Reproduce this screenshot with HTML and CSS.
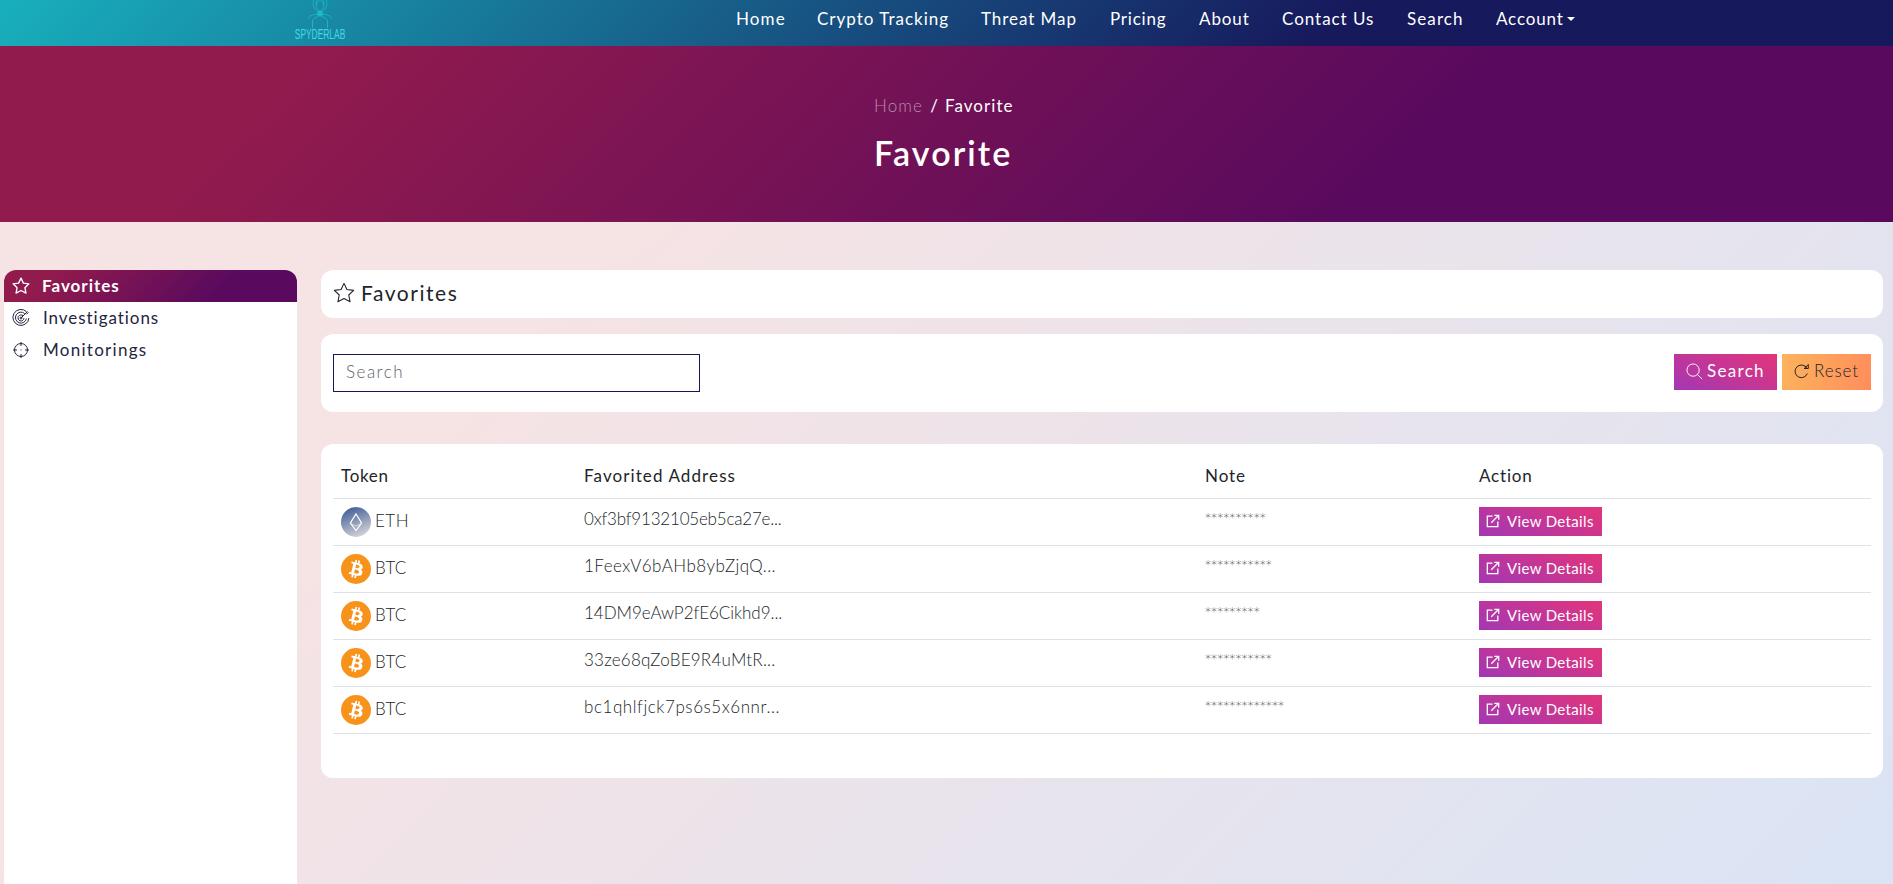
FILE: index.html
```html
<!DOCTYPE html>
<html lang="en">
<head>
<meta charset="utf-8">
<title>Favorite</title>
<link rel="stylesheet" href="styles.css">
</head>
<body>
<svg class="defs" width="0" height="0">
  <defs>
    <linearGradient id="ethg" x1="0.2" y1="0" x2="0.6" y2="1"><stop offset="0" stop-color="#3d5b97"/><stop offset="1" stop-color="#d3d2d6"/></linearGradient>
    <symbol id="star" viewBox="0 0 24 24"><path d="M12 1.500l3.200 6.700 7.300.9-5.300 5.100 1.400 7.300-6.600-3.500-6.600 3.500 1.400-7.300L1.500 9.100l7.300-.9z" fill="none" stroke="currentColor" stroke-linejoin="round"/></symbol>
    <symbol id="ext" viewBox="0 0 16 16"><path d="M7.500 2.500H1.500v12h12V8.500M9.500 1.500h5v5M14.500 1.500L6 10" fill="none" stroke="currentColor" stroke-width="1.500"/></symbol>
    <symbol id="eth" viewBox="0 0 30 30"><circle cx="15" cy="15" r="15" fill="url(#ethg)"/><path d="M15 7l5.600 9L15 23.500 9.400 16z" fill="none" stroke="#fff" stroke-width="1.200"/><path d="M10 16.500l5 2.500 5-2.500" fill="none" stroke="#fff" stroke-opacity=".55"/></symbol>
    <symbol id="btc" viewBox="0 0 32 32"><circle cx="16" cy="16" r="16" fill="#f7931a"/><path fill="#fff" fill-rule="evenodd" d="M23.189 14.020c.314-2.096-1.283-3.223-3.465-3.975l.708-2.840-1.728-.43-.69 2.765c-.454-.114-.92-.22-1.385-.326l.695-2.783L15.596 6l-.708 2.839c-.376-.086-.746-.17-1.104-.26l.002-.009-2.384-.595-.46 1.846s1.283.294 1.256.312c.7.175.826.638.805 1.006l-.806 3.235c.048.012.110.030.180.057l-.183-.045-1.130 4.532c-.086.212-.303.531-.793.410.018.025-1.256-.313-1.256-.313l-.858 1.978 2.250.561c.418.105.828.215 1.231.318l-.715 2.872 1.727.43.708-2.840c.472.127.930.245 1.378.357l-.706 2.828 1.728.43.715-2.866c2.948.558 5.164.333 6.097-2.333.752-2.146-.037-3.385-1.588-4.192 1.130-.26 1.980-1.003 2.207-2.538zm-3.950 5.538c-.533 2.147-4.148.986-5.320.695l.950-3.805c1.172.293 4.929.872 4.370 3.110zm.535-5.569c-.487 1.953-3.495.960-4.470.717l.860-3.450c.975.243 4.118.696 3.610 2.733z"/></symbol>
  </defs>
</svg>
<header class="navbar">
  <a class="logo">
    <svg class="spider" viewBox="0 0 26 28"><path d="M7 0C5 5 7 9 11 12M19 0C21 5 19 9 15 12M10 0L9 5M16 0L17 5M1 19C3 15 7 14 11 14.500M25 19C23 15 19 14 15 14.500M5.500 28V20L11 16M20.500 28V20L15 16"/><circle cx="13" cy="13.500" r="2.800"/><ellipse class="body" cx="13" cy="5.500" rx="3.500" ry="5.500"/></svg>
    <span class="wordmark">SPYDERLAB</span>
  </a>
  <nav class="menu">
    <a class="m-home">Home</a><a class="m-crypto">Crypto Tracking</a><a class="m-threat">Threat Map</a><a class="m-pricing">Pricing</a><a class="m-about">About</a><a class="m-contact">Contact Us</a><a class="m-search">Search</a><a class="m-account">Account<i class="caret"></i></a>
  </nav>
</header>
<section class="hero">
  <div class="hero-inner">
    <div class="crumbs"><span class="crumb-home">Home</span><span class="slash">/</span><span class="crumb-cur">Favorite</span></div>
    <h1>Favorite</h1>
  </div>
</section>
<main class="layout">
  <aside class="side">
    <a class="side-item active"><svg class="side-icon" stroke-width="1.800"><use href="#star"/></svg><span class="s-fav">Favorites</span></a>
    <a class="side-item"><svg class="side-icon" viewBox="0 0 18 18" fill="none" stroke="currentColor"><path d="M14.500 2.700A8 8 0 1 0 16.900 9M12.700 4.600A5.500 5.500 0 1 0 14.400 9.500M11 6.700A3 3 0 1 0 12 9M9 9l6.500-6.500M16.500 3.500l-2 1.500"/><circle cx="9" cy="9" r="1"/></svg><span class="s-inv">Investigations</span></a>
    <a class="side-item"><svg class="side-icon" viewBox="0 0 18 18" fill="none" stroke="currentColor"><circle cx="9" cy="9" r="6.500"/><path d="M9 1v4M9 13v4M1 9h4M13 9h4M9 8.500v1"/></svg><span class="s-mon">Monitorings</span></a>
  </aside>
  <div class="content">
    <div class="card title-card"><svg class="title-icon" stroke-width="1.200"><use href="#star"/></svg><h2>Favorites</h2></div>
    <div class="card search-card">
      <div class="field"><span>Search</span></div>
      <div class="buttons">
        <button class="btn find"><svg viewBox="0 0 18 18" fill="none" stroke="currentColor"><circle cx="7.500" cy="7.500" r="6.500"/><path d="M12.200 12.200l5 5"/></svg><span>Search</span></button>
        <button class="btn reset"><svg viewBox="0 0 16 16" fill="none" stroke="currentColor"><path d="M13.300 10.500A6.300 6.300 0 1 1 11 3.200l2 1.300M14.300 1.500v4H10M14.300 1.500L10.500 5.300"/></svg><span>Reset</span></button>
      </div>
    </div>
    <div class="card table-card">
      <div class="row head"><span class="h-token">Token</span><span class="h-addr">Favorited Address</span><span class="h-note">Note</span><span class="h-action">Action</span></div>
      <div class="row"><div class="token"><svg><use href="#eth"/></svg><span class="t-eth">ETH</span></div><div class="addr a1">0xf3bf9132105eb5ca27e...</div><div class="note">**********</div><div class="act"><button class="details"><svg><use href="#ext"/></svg><span>View Details</span></button></div></div>
      <div class="row"><div class="token"><svg><use href="#btc"/></svg><span>BTC</span></div><div class="addr a2">1FeexV6bAHb8ybZjqQ...</div><div class="note">***********</div><div class="act"><button class="details"><svg><use href="#ext"/></svg><span>View Details</span></button></div></div>
      <div class="row"><div class="token"><svg><use href="#btc"/></svg><span>BTC</span></div><div class="addr a3">14DM9eAwP2fE6Cikhd9...</div><div class="note">*********</div><div class="act"><button class="details"><svg><use href="#ext"/></svg><span>View Details</span></button></div></div>
      <div class="row"><div class="token"><svg><use href="#btc"/></svg><span>BTC</span></div><div class="addr a4">33ze68qZoBE9R4uMtR...</div><div class="note">***********</div><div class="act"><button class="details"><svg><use href="#ext"/></svg><span>View Details</span></button></div></div>
      <div class="row"><div class="token"><svg><use href="#btc"/></svg><span>BTC</span></div><div class="addr a5">bc1qhlfjck7ps6s5x6nnr...</div><div class="note">*************</div><div class="act"><button class="details"><svg><use href="#ext"/></svg><span>View Details</span></button></div></div>
    </div>
  </div>
</main>
</body>
</html>
```
FILE: styles.css
```css
* { box-sizing: border-box; }
body {
  margin: 0; height: 884px; overflow: hidden;
  display: flex; flex-direction: column;
  font: 300 17px/24px Lato, "Open Sans", sans-serif; color: #212529;
  background: linear-gradient(135deg, #f6e3e4 31%, #dae4f5 100%);
}
.defs { position: absolute; }
span, h1, h2, a { white-space: nowrap; }
.navbar {
  height: 46px; flex: none; display: flex; align-items: flex-start;
  padding-left: 295px; background: linear-gradient(135deg, #18b0bd 0%, #17195d 70%);
}
.logo { width: 50px; height: 40px; display: flex; flex-direction: column; align-items: center; margin-right: 391px; }
.spider { width: 26px; height: 28px; flex: none; fill: #1fb9c8; stroke: #1eb2c2; stroke-width: 1; }
.spider path, .spider .body { fill: none; }
.wordmark { font: 400 15px/11px "Liberation Sans", sans-serif; color: #43dbe0; transform: scaleX(.56); }
.menu { display: flex; gap: 32px; color: #fff; font-weight: 400; padding-top: 7px; }
.menu a { display: flex; align-items: center; }
.m-home { width: 49px; letter-spacing: 1.1px; }
.m-crypto { width: 132px; letter-spacing: 1px; }
.m-threat { width: 97px; letter-spacing: .94px; }
.m-pricing { width: 57px; letter-spacing: .78px; }
.m-about { width: 51px; letter-spacing: .9px; }
.m-contact { width: 93px; letter-spacing: .96px; }
.m-search { width: 57px; letter-spacing: 1.1px; }
.m-account { letter-spacing: .84px; }
.caret { border: 4px solid transparent; border-top-color: #fff; border-bottom: 0; margin-left: 3px; }
.hero {
  height: 176px; flex: none; display: flex; justify-content: center; padding-top: 48px;
  background: linear-gradient(135deg, #921b4d 15%, #590a5e 73%); color: #fff;
}
.hero-inner { width: 145px; }
.crumbs { display: flex; gap: 7px; font-weight: 400; }
.crumb-home { color: #b58fa8; width: 49px; letter-spacing: 1.1px; font-weight: 300; }
.slash { width: 8px; text-align: center; }
.crumb-cur { letter-spacing: 1.05px; }
h1 { margin: 16px 0 0; font-size: 34px; line-height: 38px; font-weight: 600; letter-spacing: 2.1px; }
.layout { display: flex; flex: 1; padding: 48px 10px 0 4px; gap: 24px; }
.side { width: 293px; background: #fff; border-radius: 12px 12px 0 0; overflow: hidden; color: #24253f; font-weight: 400; }
.side-item { display: flex; align-items: center; height: 32px; padding-left: 8px; gap: 13px; }
.side-item.active { background: linear-gradient(135deg, #921b4d 15%, #590a5e 73%); color: #fff; font-weight: 700; gap: 12px; }
.side-icon { width: 18px; height: 18px; flex: none; }
.s-fav { letter-spacing: 1px; }
.s-inv { letter-spacing: .95px; }
.s-mon { letter-spacing: 1.28px; }
.content { flex: 1; }
.card { background: #fff; border-radius: 12px; padding: 0 12px; }
.title-card { height: 48px; display: flex; align-items: center; gap: 6px; margin-bottom: 16px; padding-bottom: 3px; }
.title-icon { width: 22px; height: 22px; }
h2 { margin: 0; font-size: 21px; line-height: 24px; font-weight: 400; letter-spacing: 1.55px; }
.search-card { height: 78px; display: flex; justify-content: space-between; padding-top: 20px; margin-bottom: 32px; }
.field { width: 367px; height: 38px; border: 1px solid #15175c; padding: 5px 12px; color: #5c636a; letter-spacing: 1.5px; }
.buttons { display: flex; gap: 5px; }
.btn { height: 36px; border: 0; padding: 0 0 2px 12px; display: flex; align-items: center; gap: 4px; font: inherit; }
.btn svg { width: 17px; height: 17px; flex: none; }
.find { width: 103px; background: linear-gradient(25deg, #a337b4, #e3357a); color: #fff; font-weight: 400; letter-spacing: 1.3px; }
.reset { width: 89px; background: linear-gradient(100deg, #fdb35c, #ff8d5c); color: #212529; letter-spacing: .9px; }
.reset svg { width: 16px; height: 16px; }
.table-card { height: 334px; padding-top: 8px; }
.row { display: grid; grid-template-columns: 243px 621px 274px 1fr; height: 47px; border-bottom: 1px solid #dee2e6; padding: 8px 8px 0; }
.row.head { font-weight: 400; padding-top: 12px; }
.h-token { letter-spacing: .7px; }
.h-addr { letter-spacing: 1.1px; }
.h-note { letter-spacing: .95px; }
.h-action { letter-spacing: .8px; }
.token { display: flex; height: 30px; align-items: center; gap: 4px; letter-spacing: .2px; }
.token svg { width: 30px; height: 30px; }
.token span { padding-bottom: 2px; }
.t-eth { letter-spacing: .5px; }
.a1 { letter-spacing: -.2px; }
.a2 { letter-spacing: .46px; }
.a3 { letter-spacing: -.04px; }
.a4 { letter-spacing: .22px; }
.a5 { letter-spacing: .56px; }
.note { font-family: "DejaVu Sans", sans-serif; font-size: 12px; line-height: 22px; letter-spacing: .08px; }
.details { width: 123px; height: 29px; border: 0; padding: 0 0 1px 7px; display: flex; align-items: center; gap: 7px; color: #fff; font: 400 15px/21px Lato, sans-serif; letter-spacing: .35px; background: linear-gradient(25deg, #a337b4, #e3357a); }
.details svg { width: 14px; height: 14px; flex: none; }
```
